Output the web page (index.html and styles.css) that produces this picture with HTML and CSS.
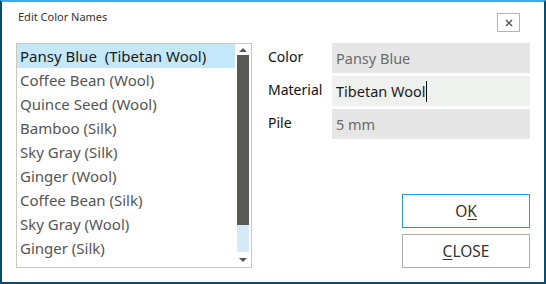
FILE: index.html
```html
<!DOCTYPE html>
<html>
<head>
<meta charset="utf-8">
<link rel="stylesheet" href="styles.css">
</head>
<body>
<div class="window">
  <div class="titlebar">
    <div class="title">Edit Color Names</div>
    <div class="close-x">
      <svg width="8" height="8" viewBox="0 0 8 8"><path d="M1 1L7 7M7 1L1 7" stroke="#555" stroke-width="1.4"/></svg>
    </div>
  </div>
  <div class="content">
    <div class="listbox">
      <ul class="items">
        <li class="item selected">Pansy Blue&nbsp; (Tibetan Wool)</li>
        <li class="item">Coffee Bean (Wool)</li>
        <li class="item">Quince Seed (Wool)</li>
        <li class="item">Bamboo (Silk)</li>
        <li class="item">Sky Gray (Silk)</li>
        <li class="item">Ginger (Wool)</li>
        <li class="item">Coffee Bean (Silk)</li>
        <li class="item">Sky Gray (Wool)</li>
        <li class="item">Ginger (Silk)</li>
        <li class="item">Bamboo (Wool)</li>
      </ul>
      <div class="scrollbar">
        <div class="arrow-box up"><span class="tri-up"></span></div>
        <div class="track"><div class="thumb"></div></div>
        <div class="arrow-box down"><span class="tri-down"></span></div>
      </div>
    </div>
    <div class="side">
      <div class="form">
        <div class="label">Color</div>
        <div class="field readonly">Pansy Blue</div>
        <div class="label">Material</div>
        <div class="field editable">Tibetan Wool<span class="caret"></span></div>
        <div class="label">Pile</div>
        <div class="field readonly">5 mm</div>
      </div>
      <div class="buttons">
        <div class="btn primary">O<u>K</u></div>
        <div class="btn"><u>C</u>LOSE</div>
      </div>
    </div>
  </div>
</div>
</body>
</html>
```

FILE: styles.css
```css
* { box-sizing: border-box; }
html, body { margin: 0; padding: 0; background: #fff; }
body { font-family: "Noto Sans", "Open Sans", sans-serif; }

.window {
  width: 546px;
  height: 284px;
  background: #fff;
  border: 2px solid #0e4a6b;
  border-top: 2px solid #3fa9e0;
  display: flex;
  flex-direction: column;
}

.titlebar {
  height: 41px;
  display: flex;
  align-items: flex-start;
  padding: 0 24px 0 16px;
}
.title {
  font-size: 11px;
  line-height: 16px;
  color: #333;
  margin-top: 7px;
}
.close-x {
  margin-left: auto;
  margin-top: 11px;
  width: 23px;
  height: 19px;
  border: 1px solid #b4b4b4;
  display: flex;
  align-items: center;
  justify-content: center;
}

.content {
  display: flex;
  padding: 0 14px 0 14px;
  gap: 16px;
}

.listbox {
  width: 236px;
  height: 225px;
  border: 1px solid #c8c8bc;
  display: flex;
  overflow: hidden;
}
.items {
  list-style: none;
  margin: 0;
  padding: 0;
  width: 218px;
  overflow: hidden;
}
.item {
  height: 24px;
  line-height: 24px;
  font-size: 15px;
  padding-left: 3px;
  color: #555;
  white-space: nowrap;
}
.item.selected {
  background: #c5e7fa;
  color: #1a1a1a;
}

.scrollbar {
  width: 16px;
  display: flex;
  flex-direction: column;
}
.arrow-box {
  display: flex;
  justify-content: center;
}
.arrow-box.up { height: 11px; align-items: center; padding-top: 1px; }
.arrow-box.down { flex: 1; align-items: center; }
.tri-up {
  width: 0; height: 0;
  border-left: 4px solid transparent;
  border-right: 4px solid transparent;
  border-bottom: 4px solid #555;
}
.tri-down {
  width: 0; height: 0;
  border-left: 4px solid transparent;
  border-right: 4px solid transparent;
  border-top: 4px solid #555;
}
.track {
  height: 197px;
  margin: 0 2px;
  background: #d5eaf8;
}
.thumb {
  height: 170px;
  background: #595953;
}

.side {
  flex: 1;
  height: 225px;
  display: flex;
  flex-direction: column;
}
.form {
  display: grid;
  grid-template-columns: 64px 1fr;
  row-gap: 3px;
}
.label {
  font-size: 14px;
  color: #111;
  height: 30px;
  line-height: 28px;
}
.field {
  height: 30px;
  line-height: 30px;
  font-size: 14.5px;
  padding-left: 4px;
  display: flex;
  align-items: center;
}
.field.readonly { background: #e6e6e6; color: #6a6a6a; }
.field.editable { background: #eff1ef; color: #1a1a1a; }
.caret {
  display: inline-block;
  width: 1px;
  height: 21px;
  background: #000;
  margin-left: 1px;
}

.buttons {
  margin-top: auto;
  display: flex;
  flex-direction: column;
  align-items: flex-end;
  gap: 6px;
}
.btn {
  width: 128px;
  height: 34px;
  border: 1px solid #adadad;
  font-size: 15.5px;
  color: #333;
  display: flex;
  align-items: center;
  justify-content: center;
}
.btn.primary { border-color: #2a96dc; }
.btn u { text-decoration-thickness: 1px; text-underline-offset: 2px; }
```
